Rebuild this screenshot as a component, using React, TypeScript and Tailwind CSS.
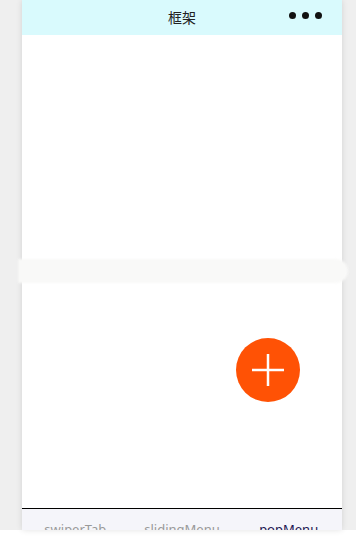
const TABS = [
  { label: 'swiperTab', active: false },
  { label: 'slidingMenu', active: false },
  { label: 'popMenu', active: true },
];

export default function App() {
  return (
    <div className="relative w-[356px] h-[539px] overflow-hidden flex flex-col bg-white" style={{ fontFamily: '"Noto Sans", "Noto Sans CJK SC", sans-serif' }}>
      <div className="h-[530px] bg-[#efefef] pl-[22px] shrink-0">
        {/* phone frame */}
        <div className="relative w-[320px] h-full bg-white flex flex-col shadow-[0_0_6px_rgba(0,0,0,0.12)] overflow-hidden">
          <header className="relative h-[35px] shrink-0 bg-[#d9fafd] flex items-center justify-center">
            <span className="text-[14px] text-[#222] leading-none">框架</span>
            <div className="absolute right-[20px] top-[12px] flex gap-[6px]">
              <span className="w-[7px] h-[7px] rounded-full bg-[#111]" />
              <span className="w-[7px] h-[7px] rounded-full bg-[#111]" />
              <span className="w-[7px] h-[7px] rounded-full bg-[#111]" />
            </div>
          </header>

          <main className="relative flex-1">
            <button className="absolute left-[214px] top-[303px] w-[64px] h-[64px] rounded-full bg-[#ff5205] flex items-center justify-center">
              <svg width="34" height="34" viewBox="0 0 34 34">
                <path d="M17 1v32M1 17h32" stroke="#fff" strokeWidth="2.5" />
              </svg>
            </button>
          </main>

          <nav className="h-[22px] shrink-0 border-t border-black bg-[#f5f5fa] grid grid-cols-3">
            {TABS.map((t) => (
              <div key={t.label} className="flex justify-center pt-[14px]">
                <span className={`text-[13px] leading-none ${t.active ? 'text-[#1a1450]' : 'text-[#999]'}`}>{t.label}</span>
              </div>
            ))}
          </nav>
        </div>
      </div>
      <div className="flex-1 bg-white" />

      {/* faint toast band across the middle */}
      <div className="absolute left-[18px] top-[259px] w-[330px] h-[24px] bg-[#f9f9f8] rounded-r-full blur-[1px]" />
    </div>
  );
}
